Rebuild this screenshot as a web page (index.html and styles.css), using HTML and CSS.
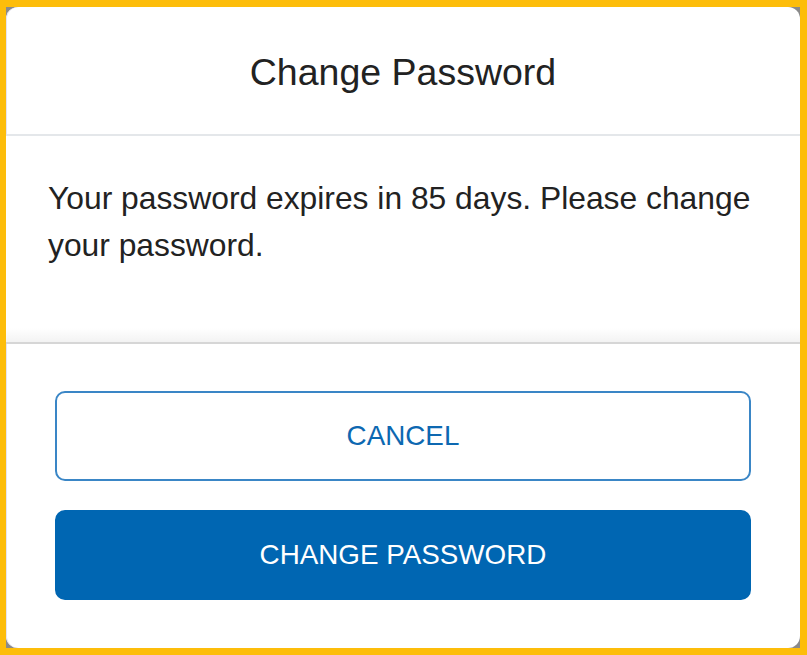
FILE: index.html
```html
<!DOCTYPE html>
<html lang="en">
<head>
<meta charset="utf-8">
<title>Change Password</title>
<link rel="stylesheet" href="styles.css">
</head>
<body>
<div class="frame">
  <div class="card">
    <header class="card-header">
      <h1 class="title">Change Password</h1>
    </header>
    <section class="card-body">
      <p class="message">Your password expires in 85 days. Please change your password.</p>
    </section>
    <footer class="card-footer">
      <button class="btn btn-outline" type="button">CANCEL</button>
      <button class="btn btn-primary" type="button">CHANGE PASSWORD</button>
    </footer>
  </div>
</div>
</body>
</html>
```

FILE: styles.css
```css
* { box-sizing: border-box; }

html, body {
  margin: 0;
  padding: 0;
  background: #ffffff;
}

body {
  font-family: "Liberation Sans", Arial, Helvetica, sans-serif;
}

.frame {
  width: 807px;
  height: 655px;
  border-style: solid;
  border-color: #fdbd0a;
  border-width: 7px 7px 7px 6px;
  background: #8a8a8a;
}

.card {
  height: 100%;
  background: #ffffff;
  border-radius: 12px;
  display: flex;
  flex-direction: column;
  overflow: hidden;
  box-shadow: inset 1px 0 0 #e6e4ef;
}

.card-header {
  height: 129px;
  display: flex;
  align-items: center;
  justify-content: center;
  border-bottom: 2px solid #e4e7ea;
}

.title {
  margin: 0;
  font-weight: 400;
  font-size: 37.5px;
  color: #222222;
  padding-top: 3px;
}

.card-body {
  height: 208px;
  padding: 39px 38px 0 42px;
  background: linear-gradient(to bottom, #ffffff 0, #ffffff 192px, #f1f1f1 208px);
  border-bottom: 2px solid #d6d6d6;
}

.message {
  margin: 0;
  font-size: 31.8px;
  line-height: 47px;
  color: #222222;
}

.card-footer {
  flex: 1;
  display: flex;
  flex-direction: column;
  gap: 29px;
  padding: 47px 49px 0 49px;
}

.btn {
  height: 90px;
  width: 100%;
  border-radius: 10px;
  font-family: "Liberation Sans", Arial, Helvetica, sans-serif;
  font-size: 27.8px;
  cursor: pointer;
}

.btn-outline {
  background: #ffffff;
  border: 2px solid #3a86c6;
  color: #0d68b1;
}

.btn-primary {
  background: #0066b2;
  border: 2px solid #0066b2;
  color: #ffffff;
}
```
